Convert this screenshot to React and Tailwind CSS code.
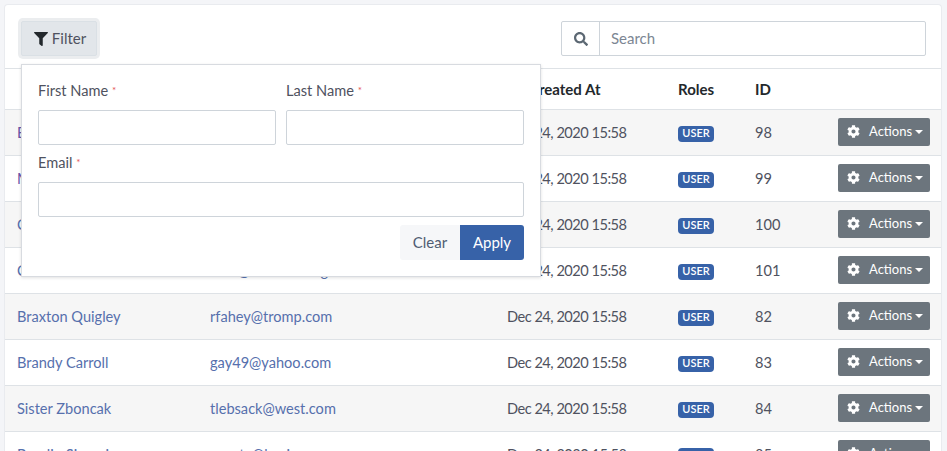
import React from "react";
import { FaCog, FaFilter, FaSearch } from "react-icons/fa";

const users = [
    { name: "Emmett Hahn", email: "ohara@gmail.com", id: 98, tone: "text-[#6a55a8]" },
    { name: "Mabel Kozey", email: "mabel@gmail.com", id: 99, tone: "text-[#6a55a8]" },
    { name: "Carey Lang", email: "carey@hotmail.com", id: 100 },
    { name: "Cruz Zulauf", email: "cruz@kuhlman.org", id: 101 },
    { name: "Braxton Quigley", email: "rfahey@tromp.com", id: 82 },
    { name: "Brandy Carroll", email: "gay49@yahoo.com", id: 83 },
    { name: "Sister Zboncak", email: "tlebsack@west.com", id: 84 },
    { name: "Braulio Simonis", email: "erunte@kevin.com", id: 85 },
];

const FilterField = ({ label, className = "" }) => (
    <div className={className}>
        <label className="block h-[21px] text-[14.6px] leading-[21px]">
            {label} <span className="align-top text-[10px] text-[#e55353]">*</span>
        </label>
        <input className="mt-[9px] block h-[35px] w-full rounded-[2px] border border-[#ced4da] bg-white" />
    </div>
);

const FilterDropdown = () => (
    <div className="absolute left-[16px] top-[59px] z-10 h-[213px] w-[520px] border border-[#d8dbe0] bg-white px-[16px] pt-[15px] shadow-[0_1px_3px_rgba(0,0,0,0.12)]">
        <div className="flex gap-[10px]">
            <FilterField label="First Name" className="flex-1" />
            <FilterField label="Last Name" className="flex-1" />
        </div>
        <FilterField label="Email" className="mt-[7px]" />
        <div className="mt-[8px] flex justify-end">
            <button className="h-[35px] w-[60px] rounded-l-[3px] bg-[#f6f7f9] text-[#4f5d73]">Clear</button>
            <button className="h-[35px] w-[64px] rounded-r-[3px] bg-[#3762a8] text-white">Apply</button>
        </div>
    </div>
);

const UserRow = ({ user, striped }) => (
    <tr className={`h-[46px] border-t border-[#dee2e6] text-[14.6px] ${striped ? "bg-[#f6f6f6]" : "bg-white"}`}>
        <td className={`pl-[12px] ${user.tone || "text-[#5670ad]"}`}>{user.name}</td>
        <td className="pl-[12px] text-[#5670ad]">{user.email}</td>
        <td className="pl-[12px] tracking-[-0.5px]">Dec 24, 2020 15:58</td>
        <td className="pl-[12px] pt-[2px]">
            <span className="flex h-[16px] w-[36px] items-center justify-center rounded-[4px] bg-[#3762a8] text-[11px] font-semibold text-white">
                USER
            </span>
        </td>
        <td className="pl-[12px]">{user.id}</td>
        <td className="pb-[2px] pr-[11px]">
            <button className="ml-auto flex h-[28px] w-[92px] items-center rounded-[2px] bg-[#6c757d] pl-[9px] text-[13px] text-white">
                <FaCog className="text-[13px]" />
                <span className="ml-[9px]">Actions</span>
                <span className="ml-[3px] border-x-[4px] border-t-[4px] border-x-transparent border-t-white" />
            </button>
        </td>
    </tr>
);

export default function App() {
    return (
        <div className="h-[451px] overflow-hidden bg-[#f4f5f8] pl-[4px] pr-[5px] pt-[4px] [font-family:Lato,sans-serif] text-[15px] text-[#4f5260]">
            <div className="relative rounded-t-[4px] border-x border-t border-[#e9ebef] bg-white">
                <div className="flex h-[63px] items-start justify-between pl-[16px] pr-[15px] pt-[16px]">
                    <button className="flex h-[35px] w-[76px] items-center justify-center gap-[4px] rounded-[2px] border border-[#dae0e5] bg-[#e2e6ea] pl-[2px] shadow-[0_0_0_3px_rgba(216,219,224,0.5)]">
                        <FaFilter className="text-[14px] text-[#23282c]" />
                        Filter
                    </button>
                    <div className="flex h-[35px] w-[365px] rounded-[2px] border border-[#ced4da]">
                        <span className="flex w-[38px] items-center justify-center border-r border-[#ced4da] text-[#5c6873]">
                            <FaSearch className="text-[14px]" />
                        </span>
                        <input placeholder="Search" className="flex-1 pl-[11px] placeholder:text-[#7c8693]" />
                    </div>
                </div>
                <FilterDropdown />
                <table className="w-full table-fixed">
                    <colgroup>
                        <col className="w-[193px]" />
                        <col className="w-[297px]" />
                        <col className="w-[171px]" />
                        <col className="w-[77px]" />
                        <col className="w-[80px]" />
                        <col />
                    </colgroup>
                    <thead>
                        <tr className="h-[41px] border-t border-[#dee2e6] text-left font-bold text-[#23282c]">
                            <th className="pl-[28px]">Name</th>
                            <th className="pl-[12px]">Email</th>
                            <th className="pl-[34px]">Created At</th>
                            <th className="pl-[12px]">Roles</th>
                            <th className="pl-[12px]">ID</th>
                            <th />
                        </tr>
                    </thead>
                    <tbody>
                        {users.map((user, index) => (
                            <UserRow key={user.id} user={user} striped={index % 2 === 0} />
                        ))}
                    </tbody>
                </table>
            </div>
        </div>
    );
}
